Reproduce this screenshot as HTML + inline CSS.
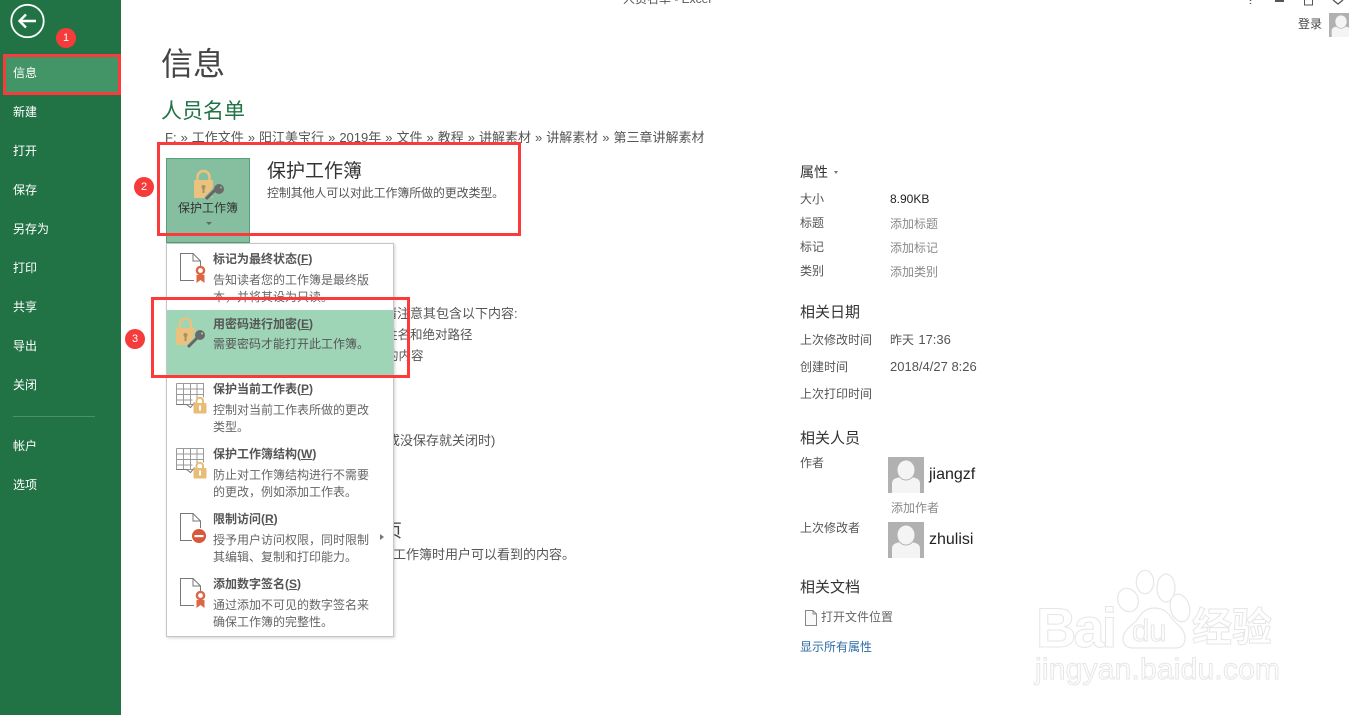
<!DOCTYPE html>
<html lang="zh-CN"><head><meta charset="utf-8"><title>人员名单 - Excel</title>
<style>
html,body{margin:0;padding:0;width:1349px;height:715px;overflow:hidden;background:#fff}
body{position:relative;font-family:"Liberation Sans","Noto Sans CJK SC",sans-serif;font-size:12px;color:#444}
.t{position:absolute;white-space:nowrap;line-height:16px;height:16px}
.nav{color:#fff;left:13px;font-size:12px}
.g{color:#666}.m{color:#555}.b{font-weight:700;color:#555}
.h{font-size:15px;line-height:18px;height:18px;color:#333}
.r{position:absolute;border:3px solid #fb3b3b;box-sizing:border-box}
.n{position:absolute;width:20px;height:20px;border-radius:50%;background:#f63b3b;color:#fff;text-align:center;line-height:20px;font-size:11px}
svg{position:absolute;overflow:visible}
.wm{position:absolute;white-space:nowrap;color:#fff;-webkit-text-stroke:1px #e6e6e6}
</style></head><body>
<div style="position:absolute;left:0;top:0;width:121px;height:715px;background:#217346"></div>
<div style="position:absolute;left:6px;top:57px;width:113px;height:35px;background:#439467"></div>
<svg style="left:10px;top:4px" width="35" height="35" viewBox="0 0 35 35" fill="none" stroke="#fff"><circle cx="17.500" cy="17" r="16.200" stroke-width="1.800"/><path d="M9.500 17H26M16 10.500L9.500 17l6.500 6.500" stroke-width="2.400"/></svg>
<div class="t nav" style="top:65px">信息</div>
<div class="t nav" style="top:104px">新建</div>
<div class="t nav" style="top:143px">打开</div>
<div class="t nav" style="top:182px">保存</div>
<div class="t nav" style="top:221px">另存为</div>
<div class="t nav" style="top:260px">打印</div>
<div class="t nav" style="top:299px">共享</div>
<div class="t nav" style="top:338px">导出</div>
<div class="t nav" style="top:377px">关闭</div>
<div style="position:absolute;left:13px;top:416px;width:82px;height:1px;background:#4a9068"></div>
<div class="t nav" style="top:438px">帐户</div>
<div class="t nav" style="top:477px">选项</div>

<div class="t" style="left:623px;top:-9px;color:#555">人员名单 - Excel</div>
<svg style="left:1240px;top:0" width="109" height="8" fill="none" stroke="#555"><path d="M10.500 0v1M10.500 3v1" stroke-width="1.500"/><path d="M35 1h9" stroke-width="2"/><path d="M64.500 0v5h8V0M68 0v-2"/><path d="M93 0l5 4 5-4" stroke-width="1.300"/></svg>
<div class="t" style="left:1298px;top:16px;color:#444">登录</div>
<svg style="left:1329px;top:13px" width="24" height="24" viewBox="0 0 36 36"><rect width="36" height="36" fill="#b1b1b1"/><path d="M4 36V27c0-5 3-6 9-7h10c6 1 9 2 9 7v9z" fill="#f4f4f4"/><ellipse cx="18" cy="13" rx="9" ry="10" fill="#f4f4f4" stroke="#b1b1b1"/></svg>

<div class="t" style="left:161px;top:42px;font-size:32px;line-height:44px;height:44px;color:#444">信息</div>
<div class="t" style="left:161px;top:98px;font-size:21px;line-height:28px;height:28px;color:#217346">人员名单</div>
<div class="t m" style="left:165px;top:130px;font-size:13px;word-spacing:.4px">F: » 工作文件 » 阳江美宝行 » 2019年 » 文件 » 教程 » 讲解素材 » 讲解素材 » 第三章讲解素材</div>

<div style="position:absolute;left:166px;top:158px;width:84px;height:85px;box-sizing:border-box;border:1px solid #53a079;background:#86bf9f"></div>
<svg style="left:192px;top:168px" width="34" height="34" viewBox="0 0 34 34"><path d="M5.500 13V9a6 6 0 0 1 12 0v4" fill="none" stroke="#ebc27e" stroke-width="2.500"/><rect x="2" y="12" width="19" height="18" rx="1.500" fill="#ebc27e"/><circle cx="11.500" cy="19" r="2" fill="#a3926a"/><rect x="10.500" y="20" width="2" height="5" fill="#a3926a"/><path d="M14 31l11-11" stroke="#86bf9f" stroke-width="5"/><circle cx="27" cy="21" r="6.500" fill="#86bf9f"/><path d="M14 31l11-11" stroke="#666" stroke-width="3"/><circle cx="27" cy="21" r="5" fill="#6a6a6a"/><circle cx="29" cy="19.500" r="1" fill="#86bf9f"/></svg>
<div class="t" style="left:178px;top:200px;color:#333">保护工作簿</div>
<div style="position:absolute;left:206px;top:222px;border:3px solid transparent;border-top:3px solid #666"></div>
<div class="t" style="left:267px;top:159px;font-size:19px;line-height:26px;height:26px;color:#333">保护工作簿</div>
<div class="t m" style="left:267px;top:185px;letter-spacing:-.15px">控制其他人可以对此工作簿所做的更改类型。</div>

<div class="t m" style="left:371px;top:306px;font-size:13px">前请注意其包含以下内容:</div>
<div class="t m" style="left:385px;top:327px;font-size:12.500px">姓名和绝对路径</div>
<div class="t m" style="left:386px;top:348px;font-size:12.500px">的内容</div>
<div class="t m" style="left:387px;top:433px;font-size:13px">或没保存就关闭时)</div>
<div class="t" style="left:384px;top:520px;font-size:18px;line-height:22px;height:22px;color:#444">页</div>
<div class="t m" style="left:393px;top:547px;font-size:13px">工作簿时用户可以看到的内容。</div>

<div style="position:absolute;left:166px;top:243px;width:228px;height:394px;box-sizing:border-box;background:#fff;border:1px solid #c6c6c6;box-shadow:1px 1px 3px rgba(0,0,0,.18)"></div>
<div style="position:absolute;left:167px;top:310px;width:226px;height:66px;background:#9fd5b7"></div>

<svg style="left:179px;top:252px" width="30" height="34" fill="none"><path d="M15 28.500H1.500V1.500H14l7.500 7.500v5" stroke="#777"/><path d="M14 1.500V9h7.500" stroke="#777"/><circle cx="21.500" cy="18.500" r="3.600" stroke="#dd6644" stroke-width="2.400"/><path d="M17.500 23v8l4-3 4 3v-8z" fill="#dd6644"/></svg>
<div class="t b" style="left:213px;top:251px">标记为最终状态(<u>F</u>)</div>
<div class="t g" style="left:213px;top:272px">告知读者您的工作簿是最终版</div>
<div class="t g" style="left:213px;top:289px">本，并将其设为只读。</div>

<svg style="left:176px;top:317px" width="32" height="34" viewBox="0 0 32 34"><path d="M4 12V7a5.500 5.500 0 0 1 11 0v5" fill="none" stroke="#ecc17d" stroke-width="2.500"/><rect x="0" y="11" width="19" height="17" rx="1.500" fill="#ecc17d"/><circle cx="9.500" cy="18" r="2" fill="#a3926a"/><rect x="8.500" y="19" width="2" height="5" fill="#a3926a"/><path d="M12 30l10-10" stroke="#9fd5b7" stroke-width="5"/><circle cx="24" cy="18" r="6.500" fill="#9fd5b7"/><path d="M12 30l10-10" stroke="#666" stroke-width="3"/><circle cx="24" cy="18" r="5" fill="#6a6a6a"/><circle cx="26" cy="16.500" r="1" fill="#9fd5b7"/></svg>
<div class="t b" style="left:213px;top:316px">用密码进行加密(<u>E</u>)</div>
<div class="t m" style="left:213px;top:336px">需要密码才能打开此工作簿。</div>

<svg style="left:176px;top:383px" width="32" height="34" fill="none" stroke="#999"><path d="M.5.500h27v14M.5.500v21h16M.5 6h27M.5 11.500h27M.5 17h16M7.500.500v21M14.500.500v21M21 .5v16"/><path d="M.5 21.500h10l4 3 4-5" stroke="#777"/><path d="M20.500 20v-2a3 3 0 0 1 6.500 0v2" stroke="#e8bd75" stroke-width="2"/><rect x="17.500" y="20" width="13" height="10.500" rx="1" fill="#e8bd75" stroke="none"/><rect x="23" y="22.500" width="2" height="5" fill="#fff" stroke="none"/></svg>
<div class="t b" style="left:213px;top:381px">保护当前工作表(<u>P</u>)</div>
<div class="t g" style="left:213px;top:402px">控制对当前工作表所做的更改</div>
<div class="t g" style="left:213px;top:419px">类型。</div>

<svg style="left:176px;top:448px" width="32" height="34" fill="none" stroke="#999"><path d="M.5.500h27v14M.5.500v21h16M.5 6h27M.5 11.500h27M.5 17h16M7.500.500v21M14.500.500v21M21 .5v16"/><path d="M.5 21.500h10l4 3 4-5" stroke="#777"/><path d="M20.500 20v-2a3 3 0 0 1 6.500 0v2" stroke="#e8bd75" stroke-width="2"/><rect x="17.500" y="20" width="13" height="10.500" rx="1" fill="#e8bd75" stroke="none"/><rect x="23" y="22.500" width="2" height="5" fill="#fff" stroke="none"/></svg>
<div class="t b" style="left:213px;top:446px">保护工作簿结构(<u>W</u>)</div>
<div class="t g" style="left:213px;top:467px">防止对工作簿结构进行不需要</div>
<div class="t g" style="left:213px;top:484px">的更改，例如添加工作表。</div>

<svg style="left:179px;top:512px" width="30" height="34" fill="none"><path d="M13 28.500H1.500V1.500H14l7.500 7.500v7" stroke="#777"/><path d="M14 1.500V9h7.500" stroke="#777"/><circle cx="20" cy="24" r="7" fill="#d9573a"/><rect x="15.500" y="23" width="9" height="2.200" fill="#fff"/></svg>
<div class="t b" style="left:213px;top:511px">限制访问(<u>R</u>)</div>
<div class="t g" style="left:213px;top:532px">授予用户访问权限，同时限制</div>
<div class="t g" style="left:213px;top:549px">其编辑、复制和打印能力。</div>
<div style="position:absolute;left:380px;top:534px;border:3.500px solid transparent;border-left:4px solid #777"></div>

<svg style="left:179px;top:577px" width="30" height="34" fill="none"><path d="M15 28.500H1.500V1.500H14l7.500 7.500v5" stroke="#777"/><path d="M14 1.500V9h7.500" stroke="#777"/><circle cx="21.500" cy="18.500" r="3.600" stroke="#dd6644" stroke-width="2.400"/><path d="M17.500 23v8l4-3 4 3v-8z" fill="#dd6644"/></svg>
<div class="t b" style="left:213px;top:576px">添加数字签名(<u>S</u>)</div>
<div class="t g" style="left:213px;top:597px">通过添加不可见的数字签名来</div>
<div class="t g" style="left:213px;top:614px">确保工作簿的完整性。</div>

<div class="t" style="left:800px;top:163px;font-size:14px;line-height:18px;height:18px;color:#333">属性</div>
<div style="position:absolute;left:834px;top:171px;border:2.500px solid transparent;border-top:3px solid #777"></div>
<div class="t m" style="left:800px;top:191px">大小</div><div class="t" style="left:890px;top:191px;color:#222">8.90KB</div>
<div class="t m" style="left:800px;top:215px">标题</div><div class="t" style="left:890px;top:216px;color:#8a8a8a">添加标题</div>
<div class="t m" style="left:800px;top:239px">标记</div><div class="t" style="left:890px;top:240px;color:#8a8a8a">添加标记</div>
<div class="t m" style="left:800px;top:263px">类别</div><div class="t" style="left:890px;top:264px;color:#8a8a8a">添加类别</div>

<div class="t h" style="left:800px;top:304px">相关日期</div>
<div class="t m" style="left:800px;top:332px">上次修改时间</div><div class="t m" style="left:890px;top:332px;word-spacing:1px">昨天 <span style="font-size:13px">17:36</span></div>
<div class="t m" style="left:800px;top:359px">创建时间</div><div class="t m" style="left:890px;top:359px;font-size:13px">2018/4/27 8:26</div>
<div class="t m" style="left:800px;top:386px">上次打印时间</div>

<div class="t h" style="left:800px;top:430px">相关人员</div>
<div class="t m" style="left:800px;top:455px">作者</div>
<svg style="left:888px;top:457px" width="36" height="36" viewBox="0 0 36 36"><rect width="36" height="36" fill="#b1b1b1"/><path d="M4 36V27c0-5 3-6 9-7h10c6 1 9 2 9 7v9z" fill="#f4f4f4"/><ellipse cx="18" cy="13" rx="9" ry="10" fill="#f4f4f4" stroke="#b1b1b1"/></svg>
<div class="t" style="left:929px;top:465px;font-size:16px;line-height:20px;height:20px;color:#222">jiangzf</div>
<div class="t" style="left:891px;top:500px;color:#8a8a8a">添加作者</div>
<div class="t m" style="left:800px;top:520px">上次修改者</div>
<svg style="left:888px;top:522px" width="36" height="36" viewBox="0 0 36 36"><rect width="36" height="36" fill="#b1b1b1"/><path d="M4 36V27c0-5 3-6 9-7h10c6 1 9 2 9 7v9z" fill="#f4f4f4"/><ellipse cx="18" cy="13" rx="9" ry="10" fill="#f4f4f4" stroke="#b1b1b1"/></svg>
<div class="t" style="left:929px;top:530px;font-size:16px;line-height:20px;height:20px;color:#222">zhulisi</div>

<div class="t h" style="left:800px;top:579px">相关文档</div>
<svg style="left:805px;top:610px" width="12" height="16" fill="#fafafa" stroke="#888"><path d="M.5.500H8L11.500 4v11.500H.5z"/><path d="M8 .5V4h3.500" fill="none"/></svg>
<div class="t g" style="left:821px;top:609px">打开文件位置</div>
<div class="t" style="left:800px;top:639px;color:#2f6ca5">显示所有属性</div>

<div class="wm" style="left:1036px;top:600px;font-size:56px;line-height:56px;font-weight:700;letter-spacing:-3px">Bai</div>
<svg style="left:1035px;top:568px" width="160" height="100" fill="#fff" stroke="#e6e6e6" stroke-width="1.200"><ellipse cx="110" cy="14" rx="8.700" ry="11.700"/><ellipse cx="131" cy="20" rx="9" ry="14"/><ellipse cx="93" cy="32" rx="10" ry="12" transform="rotate(-25 93 32)"/><ellipse cx="145" cy="40" rx="9.500" ry="14" transform="rotate(-15 145 40)"/><path d="M119 40c-9 0-13 6-18 13-6 6-13 10-13 18 0 7 5 9 11 9h42c6 0 9-4 9-10 0-8-6-12-11-17-5-7-9-13-20-13z"/></svg>
<div class="wm" style="left:1132px;top:615px;font-size:31px;line-height:32px">du</div>
<div class="wm" style="left:1192px;top:605px;font-size:40px;line-height:46px;font-weight:700">经验</div>
<div class="wm" style="left:1035px;top:652px;font-size:30px;line-height:36px;letter-spacing:.2px">jingyan.baidu.com</div>

<div class="r" style="left:3px;top:54px;width:118px;height:41px"></div>
<div class="r" style="left:157px;top:142px;width:364px;height:94px"></div>
<div class="r" style="left:151px;top:297px;width:259px;height:81px"></div>
<div class="n" style="left:56px;top:28px">1</div>
<div class="n" style="left:134px;top:177px">2</div>
<div class="n" style="left:125px;top:329px">3</div>
</body></html>
